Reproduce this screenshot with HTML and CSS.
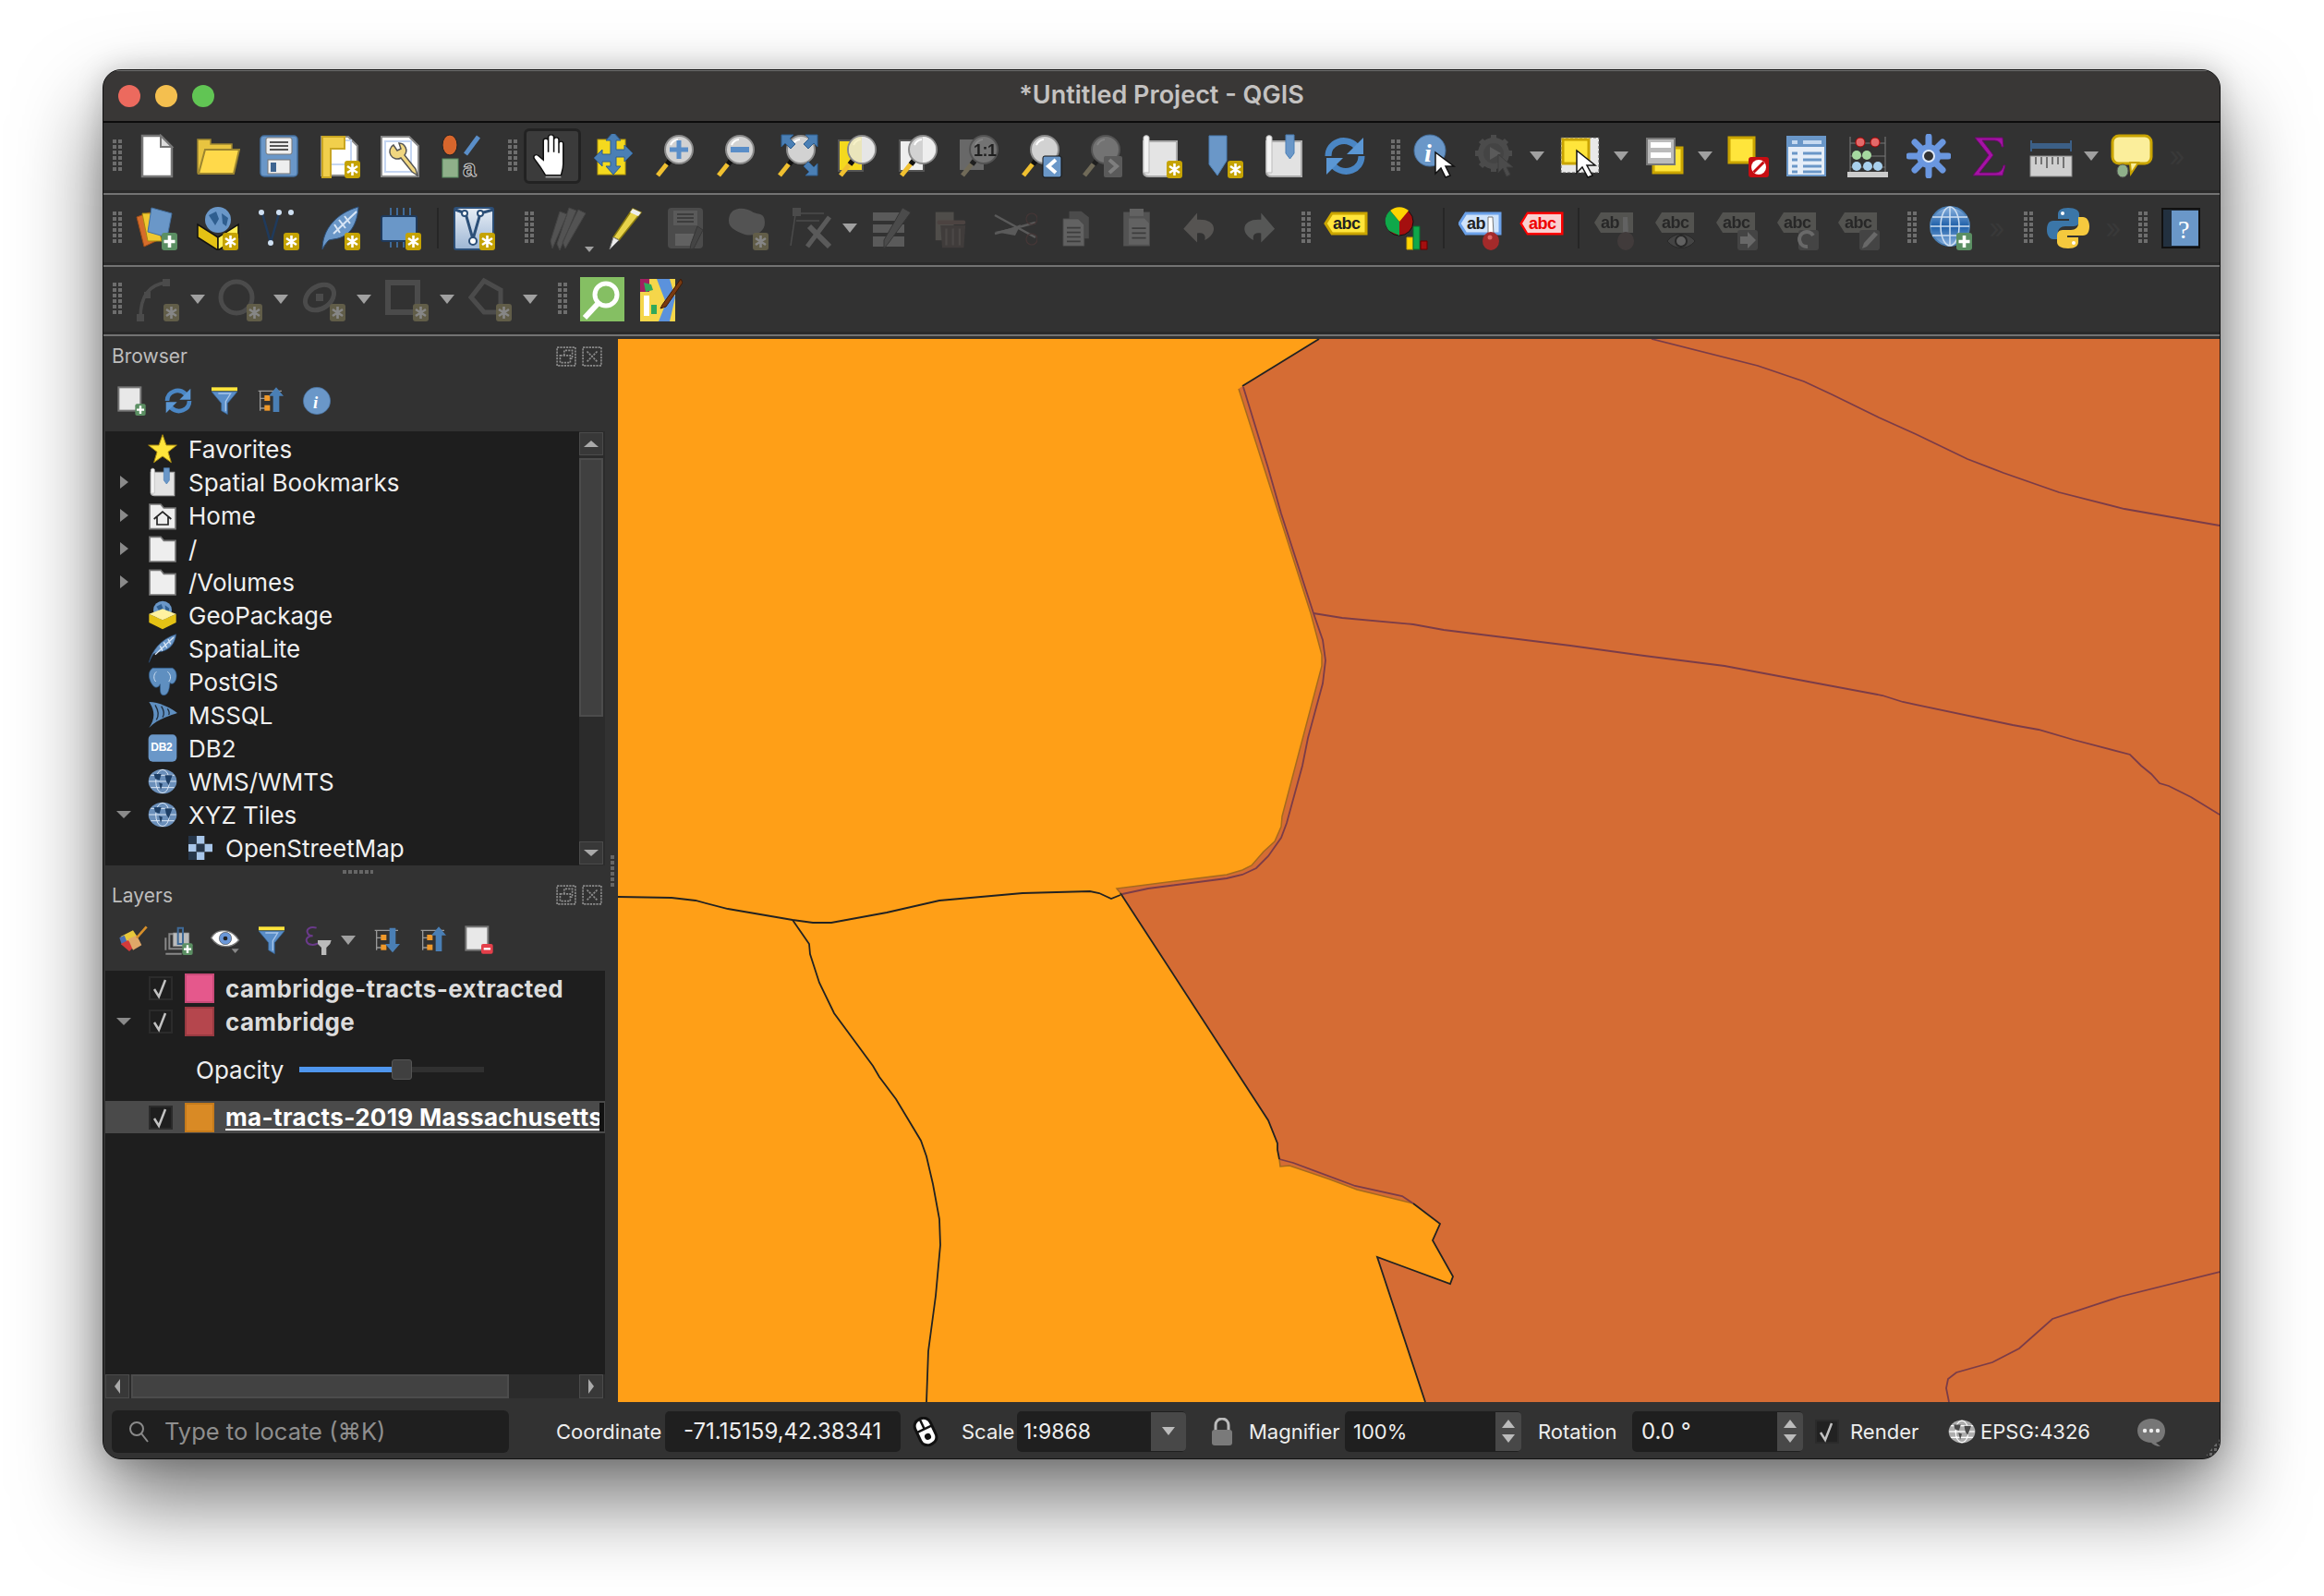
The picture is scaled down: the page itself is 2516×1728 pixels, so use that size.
FILE: index.html
```html
<!doctype html>
<html>
<head>
    <title>*Untitled Project - QGIS</title>
    <link rel="stylesheet" href="styles.css">
</head>
<body>
<svg class="defs" width="0" height="0">
    <defs>
        <linearGradient id="gGlobe" x1="0" y1="0" x2="0" y2="1"><stop offset="0" stop-color="#8db4e0"/><stop offset=".5" stop-color="#1c5ea8"/><stop offset="1" stop-color="#8db4e0"/></linearGradient>
        <linearGradient id="gSheet" x1="0" y1="0" x2="0" y2="1"><stop offset="0" stop-color="#e8eef6"/><stop offset="1" stop-color="#9db6d4"/></linearGradient>
        <g id="star"><rect x="29" y="29" width="17" height="19" rx="3" fill="#c5a303"/><path d="M37.500 32v13M32 35l11 7M43 35l-11 7" stroke="#fff" stroke-width="2.600"/></g>
        <g id="plus"><rect x="29" y="29" width="17" height="19" rx="3" fill="#5b8f63"/><path d="M37.500 32v13M31.500 38.500h12" stroke="#fff" stroke-width="3.600"/></g>
        <g id="lens"><path d="M18 30 6 45" stroke="#f0c030" stroke-width="5"/><path d="M20 28l-4 5" stroke="#111" stroke-width="6"/><circle cx="29" cy="17" r="15" fill="#d2d2d2" stroke="#8a8a8a" stroke-width="2"/><path d="M20 12a10 10 0 0 1 8-6" stroke="#fff" stroke-width="2" fill="none"/></g>
        <g id="arrowCursor"><path d="M24 20v23l6-6 5 10 5-2-5-10h9z" fill="#fff" stroke="#111" stroke-width="1.500"/></g>
        <g id="abcTag"><path d="M8 7h35v22H8L1 18z" fill="#8a8a72"/><text x="8" y="24" class="gt" fill="#222">abc</text></g>

        <symbol id="new" viewBox="0 0 48 48"><path d="M8 2h20l12 12v32H8z" fill="#fff" stroke="#777" stroke-width="2.500"/><path d="M28 2v12h12z" fill="#ddd" stroke="#777" stroke-width="2"/></symbol>
        <symbol id="open" viewBox="0 0 48 48"><path d="M2 6h14v5h23v6H10L6 42H2z" fill="#e8c440" stroke="#9c8530" stroke-width="1.500"/><path d="M10 17h37l-6 26H3z" fill="#ffd94a" stroke="#9c8530" stroke-width="2"/></symbol>
        <symbol id="save" viewBox="0 0 48 48"><rect x="4" y="2" width="40" height="44" rx="4" fill="#6a97c8" stroke="#45709f" stroke-width="1.500"/><rect x="10" y="4" width="28" height="18" rx="2" fill="#eee" stroke="#777"/><path d="M14 9h20M14 13h20M14 17h20" stroke="#555" stroke-width="2"/><rect x="12" y="28" width="24" height="15" fill="#eee" stroke="#777"/><rect x="15" y="31" width="6" height="10" fill="#3e6490"/></symbol>
        <symbol id="layoutNew" viewBox="0 0 48 48"><path d="M4 3h29l10 10v32H4z" fill="#fff" stroke="#888" stroke-width="2"/><path d="M8 7h28v26H12" fill="none" stroke="#c5d6f2" stroke-width="2"/><path d="M5 3h24v13H14v31H5z" fill="#f1cf4c" stroke="#c9a622" stroke-width="2"/><use href="#star"/></symbol>
        <symbol id="layoutMgr" viewBox="0 0 48 48"><path d="M3 3h30l10 10v33H3z" fill="#fff" stroke="#888" stroke-width="2"/><path d="M7 8h28v33H7z" fill="none" stroke="#c5d6f2" stroke-width="2"/><path d="M16 12a8 8 0 0 0 8 14l12 15 6 4-2-7-12-15a8 8 0 0 0-6-13l2 6-4 2z" fill="#f0d680" stroke="#555" stroke-width="1.500"/></symbol>
        <symbol id="style" viewBox="0 0 48 48"><ellipse cx="11" cy="12" rx="8" ry="11" fill="#d8662c" stroke="#222"/><path d="M28 22 42 3" stroke="#5a8ec8" stroke-width="5"/><rect x="3" y="27" width="17" height="20" fill="#8fb08a" stroke="#5b8f63"/><text x="25" y="46" class="gt big" fill="#222" stroke="#ccc" stroke-width="1">a</text></symbol>
        <symbol id="hand" viewBox="0 0 48 48"><g transform="translate(-5 -1) scale(1.2 1.04)"><path d="M18 45.500h14" stroke="#999" stroke-width="2.500"/><path d="M18 44C15 38 12 33 8 27c-2-3 1-6 4-3l4 4V8c0-3 4.500-3 4.500 0v12V4c0-3 5-3 5 0v16V7c0-3 4.500-3 4.500 0v14V11c0-3 4-3 4 0v21c0 5-1 8-2 12z" fill="#fff" stroke="#111" stroke-width="1.300"/></g></symbol>
        <symbol id="panSel" viewBox="0 0 48 48"><rect x="7" y="6" width="30" height="38" fill="#f4d91e" stroke="#b79b0c"/><path d="M24 1l8 9h-5v10h9v-5l9 9-9 9v-5h-9v10h5l-8 9-8-9h5V33h-9v5l-9-9 9-9v5h9V10h-5z" fill="#4a7fb5" stroke="#2f5e8f" transform="translate(0 -3)"/></symbol>
        <symbol id="zoomIn" viewBox="0 0 48 48"><use href="#lens"/><path d="M29 7v20M19 17h20" stroke="#5a8ec8" stroke-width="5"/></symbol>
        <symbol id="zoomOut" viewBox="0 0 48 48"><use href="#lens"/><path d="M19 17h20" stroke="#5a8ec8" stroke-width="6"/></symbol>
        <symbol id="zoomFull" viewBox="0 0 48 48"><use href="#lens"/><path d="M8 1h13l-4 4 6 6-5 5-6-6-4 4zM47 1v13l-4-4-6 6-5-5 6-6-4-4zM47 45H34l4-4-6-6 5-5 6 6 4-4z" fill="#4a7fb5" stroke="#2f5e8f"/></symbol>
        <symbol id="zoomSel" viewBox="0 0 48 48"><rect x="4" y="7" width="26" height="33" fill="#f4d91e" stroke="#555" stroke-width="2"/><use href="#lens"/><path d="M29 3a14 14 0 0 1 0 28z" fill="#e8e8e8" opacity=".9"/><path d="M29 3a14 14 0 0 0 0 28z" fill="#f4ecb0" opacity=".7"/></symbol>
        <symbol id="zoomLayer" viewBox="0 0 48 48"><rect x="4" y="7" width="26" height="33" fill="#eee" stroke="#555" stroke-width="2"/><use href="#lens"/><path d="M29 3a14 14 0 0 1 0 28z" fill="#eee"/></symbol>
        <symbol id="zoom11" viewBox="0 0 48 48"><rect x="3" y="6" width="26" height="33" fill="#bbb"/><use href="#lens"/><text x="18" y="24" class="gt" fill="#111">1:1</text></symbol>
        <symbol id="zoomLast" viewBox="0 0 48 48"><use href="#lens"/><rect x="27" y="24" width="20" height="23" rx="2" fill="#6a97c8" stroke="#111"/><path d="M41 28l-8 7 8 7" fill="none" stroke="#fff" stroke-width="4"/></symbol>
        <symbol id="zoomNext" viewBox="0 0 48 48"><use href="#lens"/><rect x="27" y="24" width="20" height="23" rx="2" fill="#999"/><path d="M33 28l8 7-8 7" fill="none" stroke="#eee" stroke-width="4"/></symbol>
        <symbol id="mapNew" viewBox="0 0 48 48"><path d="M4 8h36v38H10c-4 0-6-2-6-5z" fill="#e4e4e4" stroke="#aaa" stroke-width="2"/><path d="M4 4c0-3 6-3 6 0v38H4z" fill="#f4f4f4" stroke="#bbb"/><use href="#star"/></symbol>
        <symbol id="bmNew" viewBox="0 0 48 48"><path d="M6 2h19v27l-10 16-9-12z" fill="#6a97c8" stroke="#4a7fb5" transform="translate(3 0)"/><use href="#star"/></symbol>
        <symbol id="bm" viewBox="0 0 48 48"><path d="M5 8h38v38H11c-4 0-6-2-6-5z" fill="#e2e2e2" stroke="#aaa" stroke-width="2"/><path d="M5 4c0-3 6-3 6 0v38H5z" fill="#f4f4f4" stroke="#bbb"/><path d="M26 1h9v20l-4.500 6-4.500-6z" fill="#6a97c8" stroke="#4a7fb5"/></symbol>
        <symbol id="refresh" viewBox="0 0 48 48"><path d="M6 24C6 9 24 2 36 13" fill="none" stroke="#4a86c4" stroke-width="7"/><path d="M42 24C42 39 24 46 12 35" fill="none" stroke="#4a86c4" stroke-width="7"/><path d="M44 4v18H26z" fill="#5b97d4"/><path d="M4 44V26h18z" fill="#5b97d4"/></symbol>
        <symbol id="identify" viewBox="0 0 48 48"><circle cx="18" cy="18" r="17" fill="#6a97c8" stroke="#45709f"/><text x="12" y="30" class="gt huge" fill="#fff">i</text><use href="#arrowCursor"/></symbol>
        <symbol id="actions" viewBox="0 0 48 48"><circle cx="21" cy="21" r="14" fill="#666" stroke="#777" stroke-width="6"/><path d="M21 1v8M21 33v8M1 21h8M33 21h8M7 7l6 6M29 29l6 6M35 7l-6 6M7 35l6-6" stroke="#777" stroke-width="6"/><path d="M17 14l12 7-12 7z" fill="#999"/><path d="M26 22v20l5-5 4 9 4-2-4-8h7z" fill="#777" stroke="#555"/></symbol>
        <symbol id="select" viewBox="0 0 48 48"><rect x="3" y="4" width="41" height="38" fill="#e8e8e8" stroke="#555" stroke-dasharray="3 2"/><rect x="5" y="6" width="28" height="26" fill="#ffe53b" stroke="#c9a400" stroke-width="3"/><path d="M20 18v24l6-6 6 11 5-2-6-11h9z" fill="#fff" stroke="#111" stroke-width="1.500"/></symbol>
        <symbol id="selectVal" viewBox="0 0 48 48"><rect x="12" y="15" width="31" height="27" fill="#ffe53b" stroke="#c9a400" stroke-width="3"/><rect x="5" y="5" width="30" height="28" fill="#bbb" stroke="#777" stroke-width="2"/><path d="M9 9h22v6H9zM9 20h22v6H9z" fill="#fff"/></symbol>
        <symbol id="deselect" viewBox="0 0 48 48"><rect x="3" y="4" width="27" height="27" fill="#ffe53b" stroke="#c9a400" stroke-width="3"/><rect x="24" y="25" width="22" height="22" rx="3" fill="#c70d12"/><circle cx="35" cy="36" r="8" fill="#fff"/><path d="M29.500 41.500l11-11" stroke="#c70d12" stroke-width="3"/></symbol>
        <symbol id="table" viewBox="0 0 48 48"><rect x="3" y="3" width="41" height="42" fill="#e6eef8" stroke="#6a97c8" stroke-width="2"/><path d="M3 3h41v11H3z" fill="#6a97c8"/><path d="M8 7h6v4H8zM20 7h20v4H20z" fill="#c5d9f0"/><path d="M8 21h6M8 28h6M8 35h6M8 41h6M20 21h20M20 28h20M20 35h20M20 41h20" stroke="#6a97c8" stroke-width="3"/></symbol>
        <symbol id="stats" viewBox="0 0 48 48"><path d="M5 3v40M43 3v40" stroke="#666" stroke-width="1.500"/><rect x="2" y="41" width="44" height="6" fill="#ccc"/><path d="M5 10h38M5 24h38M5 36h38" stroke="#777"/><circle cx="16" cy="9" r="5" fill="#e46a6a" stroke="#a00"/><circle cx="32" cy="9" r="5" fill="#e46a6a" stroke="#a00"/><circle cx="12" cy="23" r="5" fill="#a5d8a0"/><circle cx="23" cy="23" r="5" fill="#a5d8a0"/><circle cx="12" cy="35" r="5" fill="#a8d0ee"/><circle cx="24" cy="35" r="5" fill="#a8d0ee"/><circle cx="35" cy="35" r="5" fill="#a8d0ee"/></symbol>
        <symbol id="toolbox" viewBox="0 0 48 48"><g stroke="#6a97e0" stroke-width="7" stroke-linecap="round"><path d="M24 3v42M3 24h42M9 9l30 30M39 9 9 39"/></g><circle cx="24" cy="24" r="13" fill="#6a97e0"/><circle cx="24" cy="24" r="6" fill="#323232" stroke="#dde8f8" stroke-width="2"/></symbol>
        <symbol id="sum" viewBox="0 0 48 48"><path d="M8 4h30l1 10h-2c-1-5-4-7-9-7H16l12 16-15 19h17c5 0 8-3 9-8h2l-3 11H6l17-22z" fill="#a512a5" stroke="#6a0a6a"/></symbol>
        <symbol id="measure" viewBox="0 0 48 48"><path d="M3 7v12M46 7v12" stroke="#3c5f86" stroke-width="2"/><path d="M3 13h43" stroke="#3c5f86" stroke-width="6"/><rect x="2" y="24" width="45" height="22" fill="#cfcfcf" stroke="#888"/><path d="M8 25v8M14 25v8M20 25v12M26 25v8M32 25v8M38 25v12" stroke="#555" stroke-width="1.500"/></symbol>
        <symbol id="tip" viewBox="0 0 48 48"><rect x="3" y="2" width="42" height="30" rx="7" fill="#fbee9b" stroke="#c9a400" stroke-width="3"/><path d="M22 31h9l-8 12z" fill="#fbee9b" stroke="#c9a400" stroke-width="2"/><ellipse cx="14" cy="40" rx="6" ry="7" fill="#8fb08a" stroke="#555"/></symbol>

        <symbol id="dsm" viewBox="0 0 48 48"><path d="M2 12 16 7l9 30-15 7z" fill="#d66d2b" stroke="#a04d17"/><path d="M8 8h15l6 30H14z" fill="#f0c830" stroke="#a98a10"/><path d="M18 2 40 8l-5 26-21-6z" fill="#6a97c8" stroke="#45709f"/><use href="#plus"/></symbol>
        <symbol id="gpkgNew" viewBox="0 0 48 48"><circle cx="24" cy="15" r="14" fill="#6a97c8"/><path d="M14 10l8-4 3 8-4 7zM28 8l7 5-2 9-4-3z" fill="#2f5e8f"/><path d="M2 20 24 34v14L2 34z" fill="#e4c214" stroke="#111" stroke-width="1.500"/><path d="M24 34 46 20v14L24 48z" fill="#ffee55" stroke="#111" stroke-width="1.500"/><use href="#star"/></symbol>
        <symbol id="pointNew" viewBox="0 0 48 48"><path d="M6 8l9 32 9-32" fill="none" stroke="#1f3a5c" stroke-width="2.500"/><circle cx="5" cy="7" r="3" fill="#cfe0f2"/><circle cx="15" cy="40" r="3" fill="#cfe0f2"/><circle cx="24" cy="7" r="3" fill="#cfe0f2"/><circle cx="37" cy="7" r="3" fill="#cfe0f2"/><use href="#star"/></symbol>
        <symbol id="feather" viewBox="0 0 48 48"><path d="M5 47C5 25 20 8 44 1c-1 17-8 33-27 35l-5 1c-3 3-5 6-7 10z" fill="#6a97c8" stroke="#2c4f78"/><path d="M17 30 42 6M18 20l6 9M23 15l7 9M29 11l6 8" stroke="#d8e6f6" stroke-width="2"/><use href="#star"/></symbol>
        <symbol id="chip" viewBox="0 0 48 48"><path d="M13 2v9M20 2v9M27 2v9M34 2v9M13 36v9M20 36v9M27 36v9" stroke="#3f6a98" stroke-width="2"/><rect x="3" y="11" width="38" height="27" rx="2" fill="#6a97c8" stroke="#1f3a5c" stroke-width="2"/><use href="#star"/></symbol>
        <symbol id="mesh" viewBox="0 0 48 48"><rect x="2" y="2" width="42" height="45" rx="2" fill="url(#gSheet)" stroke="#2c4f78" stroke-width="2"/><path d="M3 4l11 4 8 28 8-28 14-4" fill="none" stroke="#2c4f78" stroke-width="3"/><circle cx="22" cy="38" r="4" fill="#fff" stroke="#2c4f78" stroke-width="2"/><circle cx="30" cy="8" r="3" fill="#fff" stroke="#2c4f78" stroke-width="2"/><circle cx="13" cy="8" r="3" fill="#fff" stroke="#2c4f78" stroke-width="2"/><use href="#star"/></symbol>
        <symbol id="pencils" viewBox="0 0 48 48"><path d="M14 6l8 3L6 46 4 38zM24 2l8 3L14 48l-3-7zM34 4l8 4-22 38-3-7z" fill="#888" stroke="#666"/></symbol>
        <symbol id="pencil" viewBox="0 0 48 48"><path d="M31 3l9 4-24 30-6-3z" fill="#e8d34a" stroke="#8a7a10" stroke-width="1.500"/><path d="M31 3l9 4-3 4-9-4z" fill="#eee"/><path d="M10 34l6 3-10 10z" fill="#eee" stroke="#888"/></symbol>
        <symbol id="saveEdits" viewBox="0 0 48 48"><rect x="3" y="2" width="38" height="44" rx="4" fill="#777"/><rect x="9" y="5" width="26" height="16" fill="#999"/><path d="M13 9h18M13 13h18M13 17h18" stroke="#555" stroke-width="2"/><rect x="11" y="30" width="22" height="13" fill="#aaa"/><path d="M35 22l6 4-10 20-4 1 1-6z" fill="#666" stroke="#444"/></symbol>
        <symbol id="blob" viewBox="0 0 48 48"><path d="M4 10c4-10 18-8 24-4s14 0 14 12-14 16-24 12S0 22 4 10z" fill="#888"/><use href="#star"/></symbol>
        <symbol id="vertex" viewBox="0 0 48 48"><path d="M10 3l-6 40M10 8h30M10 16h25" stroke="#777" stroke-width="1.500"/><rect x="6" y="2" width="9" height="9" fill="#777"/><path d="M46 12 22 44" stroke="#999" stroke-width="5"/><path d="M24 22l22 22" stroke="#999" stroke-width="6"/></symbol>
        <symbol id="editAttr" viewBox="0 0 48 48"><path d="M2 7h34v9H2zM2 20h34v9H2zM2 33h34v11H2z" fill="#999"/><path d="M34 2l9 5-24 33-5 6 0-9z" fill="#777" stroke="#444"/></symbol>
        <symbol id="trash" viewBox="0 0 48 48"><g transform="translate(2 3) scale(.9)"><rect x="2" y="4" width="22" height="34" fill="#8a7a60"/><rect x="4" y="14" width="34" height="5" rx="2" fill="#a05a4a"/><path d="M8 20h30l-2 27H10z" fill="#6a5048"/><path d="M15 24v20M23 24v20M31 24v20" stroke="#8a6a60" stroke-width="2.500"/></g></symbol>
        <symbol id="cut" viewBox="0 0 48 48"><path d="M2 10l44 24M2 30l44-12" stroke="#999" stroke-width="2.500"/><path d="M2 28c10-2 20-4 28-8l-6 12z" fill="#999"/><circle cx="42" cy="14" r="6" fill="none" stroke="#a33" stroke-width="1.200"/><circle cx="42" cy="36" r="6" fill="none" stroke="#a33" stroke-width="1.200"/></symbol>
        <symbol id="copy" viewBox="0 0 48 48"><g transform="translate(5 4) scale(.82)"><path d="M14 2h16l10 8v28H14z" fill="#777"/><path d="M6 12h20l8 8v28H6z" fill="#aaa" stroke="#666"/><path d="M11 24h18M11 30h18M11 36h18M11 42h18" stroke="#555" stroke-width="2"/></g></symbol>
        <symbol id="paste" viewBox="0 0 48 48"><g transform="translate(5 3) scale(.84 .88)"><rect x="5" y="4" width="34" height="42" fill="#888"/><rect x="13" y="0" width="18" height="9" fill="#aaa"/><path d="M12 12h20l6 6v26H12z" fill="#aaa"/><path d="M16 24h18M16 30h18M16 36h18" stroke="#555" stroke-width="2"/></g></symbol>
        <symbol id="undo" viewBox="0 0 48 48"><path transform="translate(5 5) scale(.82)" d="M22 3 4 24l18 18V30c8-2 12 2 10 9 8-4 12-10 12-15 0-9-10-13-22-12z" fill="#99897e"/></symbol>
        <symbol id="redo" viewBox="0 0 48 48"><path transform="translate(5 5) scale(.82)" d="M26 3l18 21-18 18V30c-8-2-12 2-10 9-8-4-12-10-12-15 0-9 10-13 22-12z" fill="#8a958e"/></symbol>
        <symbol id="abcY" viewBox="0 0 48 48"><path d="M9 8h37v22H9L2 19z" fill="#ffe53b" stroke="#c9a400" stroke-width="3"/><text x="10" y="25" class="gt" fill="#222">abc</text></symbol>
        <symbol id="diagram" viewBox="0 0 48 48"><circle cx="16" cy="17" r="15" fill="#a40f0f" stroke="#111"/><path d="M16 17 6 5a15 15 0 0 1 20 0z" fill="#ffd400"/><path d="M16 17 6 5a15 15 0 0 0-1 22l11 5z" fill="#0fa84a"/><path d="M24 34h7v13h-7z" fill="#ffd400" stroke="#c9a400"/><path d="M31 22h7v25h-7z" fill="#0fa84a" stroke="#0a6a2f"/><path d="M39 38h7v9h-7z" fill="#a40f0f" stroke="#600"/></symbol>
        <symbol id="abPin" viewBox="0 0 48 48"><path d="M8 8h37v22H8L1 19z" fill="#cfe3fb" stroke="#6aa0e8" stroke-width="3"/><text x="9" y="25" class="gt" fill="#222">ab</text><path d="M32 12h5l1 19h-6z" fill="#fff" stroke="#777"/><ellipse cx="35" cy="38" rx="9" ry="10" fill="#a32a2a"/><circle cx="34" cy="34" r="2.500" fill="#d66"/></symbol>
        <symbol id="abcR" viewBox="0 0 48 48"><path d="M9 8h37v22H9L2 19z" fill="#fff" stroke="#f00" stroke-width="3"/><path d="M9 9h36v20H9L3 19z" fill="#f9d0d0"/><text x="10" y="25" class="gt" fill="#e00">abc</text></symbol>
        <symbol id="abOff" viewBox="0 0 48 48"><path d="M8 7h35v22H8L1 18z" fill="#8a8a72"/><text x="8" y="24" class="gt" fill="#222">ab</text><path d="M32 12h5l1 19h-6z" fill="#aaa"/><ellipse cx="35" cy="38" rx="9" ry="10" fill="#7a4a4a"/></symbol>
        <symbol id="abcEye" viewBox="0 0 48 48"><use href="#abcTag"/><path d="M14 38c8-10 22-10 30 0-8 10-22 10-30 0z" fill="#666" stroke="#222"/><circle cx="29" cy="38" r="6" fill="#aaa" stroke="#222" stroke-width="2"/></symbol>
        <symbol id="abcArrow" viewBox="0 0 48 48"><use href="#abcTag"/><rect x="24" y="26" width="22" height="22" rx="3" fill="#666"/><path d="M27 33h8v-5l9 9-9 9v-5h-8z" fill="#bbb"/></symbol>
        <symbol id="abcRot" viewBox="0 0 48 48"><use href="#abcTag"/><rect x="24" y="26" width="22" height="22" rx="3" fill="#666"/><path d="M40 32a8 8 0 1 0-6 12" fill="none" stroke="#bbb" stroke-width="4"/></symbol>
        <symbol id="abcEdit" viewBox="0 0 48 48"><use href="#abcTag"/><rect x="24" y="26" width="22" height="22" rx="3" fill="#666"/><path d="M40 28l4 3-12 13-5 2 2-6z" fill="#bbb"/></symbol>
        <symbol id="globePlus" viewBox="0 0 48 48"><circle cx="22" cy="22" r="21" fill="url(#gGlobe)" stroke="#4a7fb5" stroke-width="2"/><g fill="none" stroke="#cfe0f2" stroke-width="1.500"><ellipse cx="22" cy="22" rx="10" ry="21"/><path d="M22 1v42M3 12h38M1 22h42M3 32h38"/></g><use href="#plus"/></symbol>
        <symbol id="python" viewBox="0 0 48 48"><path d="M24 2c-8 0-11 3-11 7v5h12v2H8c-5 0-7 4-7 10s3 10 7 10h5v-7c0-4 3-7 8-7h9c4 0 6-3 6-6V9c0-4-4-7-12-7z" fill="#3b76a8"/><circle cx="18" cy="8" r="2" fill="#fff"/><path d="M24 46c8 0 11-3 11-7v-5H23v-2h17c5 0 7-4 7-10s-3-10-7-10h-5v7c0 4-3 7-8 7h-9c-4 0-6 3-6 6v7c0 4 4 7 12 7z" fill="#f5c93e"/><circle cx="30" cy="40" r="2" fill="#fff"/></symbol>
        <symbol id="help" viewBox="0 0 48 48"><rect x="2" y="3" width="40" height="42" fill="#22303f" stroke="#111" stroke-width="2"/><rect x="12" y="5" width="29" height="38" fill="#6a97c8"/><text x="19" y="35" class="gt huge thin" fill="#fff">?</text></symbol>

        <symbol id="curve" viewBox="0 0 48 48"><path d="M6 44C6 20 16 8 34 6" fill="none" stroke="#777" stroke-width="3.500"/><path d="M2 40h8v8H2zM10 16h7v7h-7zM30 2h8v8h-8z" fill="#777"/><use href="#star" transform="translate(2 0)"/></symbol>
        <symbol id="circle" viewBox="0 0 48 48"><circle cx="20" cy="22" r="17" fill="none" stroke="#777" stroke-width="5"/><use href="#star" transform="translate(2 0)"/></symbol>
        <symbol id="ellipse" viewBox="0 0 48 48"><ellipse cx="20" cy="22" rx="17" ry="12" fill="none" stroke="#777" stroke-width="5" transform="rotate(-35 20 22)"/><path d="M16 18h8v8h-8z" fill="#777"/><use href="#star" transform="translate(2 0)"/></symbol>
        <symbol id="rect" viewBox="0 0 48 48"><path d="M4 6h32v32H4z" fill="none" stroke="#777" stroke-width="6"/><use href="#star" transform="translate(2 0)"/></symbol>
        <symbol id="poly" viewBox="0 0 48 48"><path d="M18 4 36 14v24H18L4 22z" fill="none" stroke="#777" stroke-width="5"/><use href="#star" transform="translate(2 0)"/></symbol>
        <symbol id="locator" viewBox="0 0 48 48"><rect x="0" y="0" width="48" height="48" fill="#85bf63"/><circle cx="28" cy="19" r="12" fill="none" stroke="#fff" stroke-width="5"/><path d="M19 29 5 44" stroke="#fff" stroke-width="6"/></symbol>
        <symbol id="osm" viewBox="0 0 48 48"><rect x="2" y="2" width="38" height="46" fill="#f5d64a"/><path d="M20 2h14l6 20-6 26H22l8-20z" fill="#5b92dc"/><path d="M2 2h10v14H2z" fill="#a02060"/><path d="M6 6l8 2 2 6-8 2z" fill="#31a85a"/><path d="M6 20h6v22H6z" fill="#fff"/><path d="M14 30h6v10h-6z" fill="#31a85a"/><path d="M46 2 26 30l-2 4 6-2L48 6z" fill="#7a3a10" stroke="#401a05"/></symbol>

        <symbol id="addGroup" viewBox="0 0 48 48"><rect x="2" y="2" width="36" height="38" fill="#e8e8e8" stroke="#777" stroke-width="3"/><use href="#plus"/></symbol>
        <symbol id="remove" viewBox="0 0 48 48"><rect x="2" y="2" width="36" height="38" fill="#e8e8e8" stroke="#777" stroke-width="3"/><rect x="27" y="30" width="19" height="16" rx="3" fill="#e43f4a"/><path d="M31 38h11" stroke="#fff" stroke-width="3.500"/></symbol>
        <symbol id="filter" viewBox="0 0 48 48"><path d="M3 2h42v6H3z" fill="#ffe53b"/><path d="M3 9h42L29 28v18l-10-6V28z" fill="#5a8ec8" stroke="#2f5e8f"/><path d="M14 12h20L26 25v16" fill="none" stroke="#a8c6ea" stroke-width="2"/></symbol>
        <symbol id="collapse" viewBox="0 0 48 48"><path d="M4 8h38M7 8v32M7 20h10M7 36h10" stroke="#999" stroke-width="2"/><rect x="14" y="15" width="9" height="9" fill="#f0992a"/><rect x="14" y="31" width="9" height="9" fill="#f0992a"/><path d="M33 2 45 16h-7v26h-10V16h-7z" fill="#4a7fb5"/></symbol>
        <symbol id="expand" viewBox="0 0 48 48"><path d="M4 8h38M7 8v32M7 20h10M7 36h10" stroke="#999" stroke-width="2"/><rect x="14" y="15" width="9" height="9" fill="#f0992a"/><rect x="14" y="31" width="9" height="9" fill="#f0992a"/><path d="M33 44 45 30h-7V4h-10v26h-7z" fill="#4a7fb5"/></symbol>
        <symbol id="info" viewBox="0 0 48 48"><circle cx="24" cy="24" r="22" fill="#6a97c8" stroke="#45709f"/><text x="18" y="36" class="gt huge" fill="#fff">i</text></symbol>
        <symbol id="brush" viewBox="0 0 48 48"><path d="M4 18 24 8l8 12-24 12z" fill="#e8c83a"/><path d="M2 20l8-4 4 10-8 6z" fill="#4a6fb5"/><path d="M4 30l12-6 10 10-8 8z" fill="#d43a3a"/><path d="M16 22l14-6 8 16-14 8z" fill="#e0a868"/><path d="M30 20 46 2" stroke="#d8902a" stroke-width="4"/></symbol>
        <symbol id="clip" viewBox="0 0 48 48"><path d="M8 34V14h30v24H8zM2 40V20M2 46h26" fill="none" stroke="#888" stroke-width="3"/><path d="M14 12h26v22H14z" fill="#bbb" stroke="#888"/><path d="M22 4h8v26h-8z" fill="none" stroke="#3f6a98" stroke-width="3"/><use href="#plus"/></symbol>
        <symbol id="eye" viewBox="0 0 48 48"><path d="M1 20C10 4 34 4 46 24 34 38 12 38 1 20z" fill="#fff" stroke="#777" stroke-width="2"/><circle cx="24" cy="21" r="10" fill="#6a97d8" stroke="#555"/><circle cx="24" cy="21" r="3.500" fill="#222"/><path d="M34 38h12l-6 7z" fill="#888"/></symbol>
        <symbol id="exprFilter" viewBox="0 0 48 48"><path d="M22 4c-10-3-18 2-14 9 1 3 5 4 8 4-6 0-12 3-10 9 2 6 12 7 18 3" fill="none" stroke="#6a3a8a" stroke-width="3"/><path d="M24 24h22l-2 6-6 6v12h-8V36l-6-6z" fill="#bbb"/></symbol>
        <symbol id="starFav" viewBox="0 0 48 48"><path d="M24 1l6 17h17L33 29l5 17-14-10-14 10 5-17L1 18h17z" fill="#ffe53b" stroke="#a98a10" stroke-width="1.500"/></symbol>
        <symbol id="homeF" viewBox="0 0 48 48"><path d="M3 6h18l5 6h19v34H3z" fill="#eee" stroke="#777" stroke-width="2.500"/><path d="M10 30 24 18l14 12M15 27v12h18V27" fill="none" stroke="#222" stroke-width="2.500"/></symbol>
        <symbol id="folder" viewBox="0 0 48 48"><path d="M3 5h18l5 6h19v34H3z" fill="#eee" stroke="#777" stroke-width="2.500"/></symbol>
        <symbol id="gpkg" viewBox="0 0 48 48"><circle cx="24" cy="16" r="15" fill="#6a97c8"/><path d="M14 10l8-4 3 8-4 7zM28 8l7 5-2 9-4-3z" fill="#2f5e8f"/><path d="M2 22l22 10 22-10v14L24 47 2 36z" fill="#e4c214"/><path d="M2 22l22-8 22 8-22 10z" fill="#fff2a0"/></symbol>
        <symbol id="featherS" viewBox="0 0 48 48"><path d="M2 47C6 28 22 8 46 1c-2 16-12 28-30 29l-7 3c-3 4-5 9-7 14z" fill="#6a97c8" stroke="#2c4f78"/><path d="M12 34 42 6M20 20l4 8M26 14l5 9M33 9l4 8" stroke="#d8e6f6" stroke-width="2"/></symbol>
        <symbol id="pg" viewBox="0 0 48 48"><path d="M8 2h32c8 4 8 16 4 22-2 4-6 4-8 2-1 8-2 20-10 20-6 0-6-6-6-18-2 6-8 6-10 4C2 24-2 8 8 2z" fill="#5f8fc0" stroke="#2f5e8f"/><path d="M14 8c-5 4-5 12-1 16M32 8c6 4 6 12 2 16" fill="none" stroke="#cfe0f2" stroke-width="1.500"/></symbol>
        <symbol id="sail" viewBox="0 0 48 48"><path d="M2 3c14 0 34 8 46 18-10 4-30 8-46 24 10-14 10-28 0-42z" fill="#5f8fc0"/><path d="M12 8c6 10 6 18 2 24M22 10c5 8 5 14 2 18M32 14c3 4 3 8 2 10" stroke="#1e2d3d" stroke-width="2" fill="none"/></symbol>
        <symbol id="db2" viewBox="0 0 48 48"><rect x="1" y="2" width="46" height="44" rx="7" fill="#6a97c8"/><text x="5" y="29" class="gt" fill="#fff">DB2</text></symbol>
        <symbol id="globeS" viewBox="0 0 48 48"><ellipse cx="24" cy="24" rx="23" ry="20" fill="#6a8fba"/><ellipse cx="24" cy="24" rx="11" ry="19" fill="none" stroke="#dbe7f5" stroke-width="1.500"/><path d="M2 24h44M5 14h38M5 34h38" stroke="#dbe7f5" stroke-width="1.500"/><path d="M10 12h12l-3 10-7-2zM28 14h12l-6 16-4-6zM18 26l6 2-3 10z" fill="#1e3f66"/></symbol>
        <symbol id="tiles" viewBox="0 0 48 48"><path d="M16 0h16v16H16zM0 16h16v16H0zM32 16h16v16H32zM16 32h16v16H16z" fill="#a8c6ea"/><path d="M0 0h16v16H0zM16 16h16v16H16zM0 32h16v16H0z" fill="#26364a"/></symbol>
        <symbol id="dockFloat" viewBox="0 0 20 20"><path d="M1 1h18v18H1zM4 9h10v7H4zM8 9V4h8v8h-2" fill="none" stroke="#8c8c8c" stroke-width="1.500" stroke-dasharray="2 1"/></symbol>
        <symbol id="dockClose" viewBox="0 0 20 20"><path d="M1 1h18v18H1zM5 5l10 10M15 5 5 15" fill="none" stroke="#8c8c8c" stroke-width="1.500" stroke-dasharray="2 1"/></symbol>
        <symbol id="check" viewBox="0 0 26 26"><path d="M6 14l5 8 7-18" fill="none" stroke="#c2c2c2" stroke-width="2.500"/></symbol>
    </defs>
</svg>

<div class="window">
    <div class="titlebar">
        <div class="lights"><span class="light red"></span><span class="light yellow"></span><span class="light green"></span></div>
        <div class="title">*Untitled Project - QGIS</div>
    </div>

    <div class="toolbar">
        <span class="grip lead"></span>
        <span class="tb"><svg class="ic"><use href="#new"/></svg></span>
        <span class="tb"><svg class="ic"><use href="#open"/></svg></span>
        <span class="tb"><svg class="ic"><use href="#save"/></svg></span>
        <span class="tb"><svg class="ic"><use href="#layoutNew"/></svg></span>
        <span class="tb"><svg class="ic"><use href="#layoutMgr"/></svg></span>
        <span class="tb"><svg class="ic"><use href="#style"/></svg></span>
        <span class="grip"></span>
        <span class="tb active"><svg class="ic"><use href="#hand"/></svg></span>
        <span class="tb"><svg class="ic"><use href="#panSel"/></svg></span>
        <span class="tb"><svg class="ic"><use href="#zoomIn"/></svg></span>
        <span class="tb"><svg class="ic"><use href="#zoomOut"/></svg></span>
        <span class="tb"><svg class="ic"><use href="#zoomFull"/></svg></span>
        <span class="tb"><svg class="ic"><use href="#zoomSel"/></svg></span>
        <span class="tb"><svg class="ic"><use href="#zoomLayer"/></svg></span>
        <span class="tb off"><svg class="ic"><use href="#zoom11"/></svg></span>
        <span class="tb"><svg class="ic"><use href="#zoomLast"/></svg></span>
        <span class="tb off"><svg class="ic"><use href="#zoomNext"/></svg></span>
        <span class="tb"><svg class="ic"><use href="#mapNew"/></svg></span>
        <span class="tb"><svg class="ic"><use href="#bmNew"/></svg></span>
        <span class="tb"><svg class="ic"><use href="#bm"/></svg></span>
        <span class="tb"><svg class="ic"><use href="#refresh"/></svg></span>
        <span class="grip"></span>
        <span class="tb"><svg class="ic"><use href="#identify"/></svg></span>
        <span class="tb off"><svg class="ic"><use href="#actions"/></svg></span>
        <span class="drop"></span>
        <span class="tb"><svg class="ic"><use href="#select"/></svg></span>
        <span class="drop"></span>
        <span class="tb"><svg class="ic"><use href="#selectVal"/></svg></span>
        <span class="drop"></span>
        <span class="tb"><svg class="ic"><use href="#deselect"/></svg></span>
        <span class="tb pull3"><svg class="ic"><use href="#table"/></svg></span>
        <span class="tb"><svg class="ic"><use href="#stats"/></svg></span>
        <span class="tb"><svg class="ic"><use href="#toolbox"/></svg></span>
        <span class="tb"><svg class="ic"><use href="#sum"/></svg></span>
        <span class="tb"><svg class="ic"><use href="#measure"/></svg></span>
        <span class="drop"></span>
        <span class="tb pull3"><svg class="ic"><use href="#tip"/></svg></span>
        <span class="more"></span>
    </div>

    <div class="toolbar">
        <span class="grip lead"></span>
        <span class="tb"><svg class="ic"><use href="#dsm"/></svg></span>
        <span class="tb"><svg class="ic"><use href="#gpkgNew"/></svg></span>
        <span class="tb"><svg class="ic"><use href="#pointNew"/></svg></span>
        <span class="tb"><svg class="ic"><use href="#feather"/></svg></span>
        <span class="tb"><svg class="ic"><use href="#chip"/></svg></span>
        <span class="sep"></span>
        <span class="tb"><svg class="ic"><use href="#mesh"/></svg></span>
        <span class="grip g36"></span>
        <span class="tb off minidrop"><svg class="ic"><use href="#pencils"/></svg></span>
        <span class="tb tight"><svg class="ic"><use href="#pencil"/></svg></span>
        <span class="tb off"><svg class="ic"><use href="#saveEdits"/></svg></span>
        <span class="tb off"><svg class="ic"><use href="#blob"/></svg></span>
        <span class="tb off"><svg class="ic"><use href="#vertex"/></svg></span>
        <span class="drop"></span>
        <span class="tb off"><svg class="ic"><use href="#editAttr"/></svg></span>
        <span class="tb off"><svg class="ic"><use href="#trash"/></svg></span>
        <span class="tb off"><svg class="ic"><use href="#cut"/></svg></span>
        <span class="tb off"><svg class="ic"><use href="#copy"/></svg></span>
        <span class="tb off"><svg class="ic"><use href="#paste"/></svg></span>
        <span class="tb off"><svg class="ic"><use href="#undo"/></svg></span>
        <span class="tb off"><svg class="ic"><use href="#redo"/></svg></span>
        <span class="grip g28"></span>
        <span class="tb"><svg class="ic"><use href="#abcY"/></svg></span>
        <span class="tb"><svg class="ic"><use href="#diagram"/></svg></span>
        <span class="sep"></span>
        <span class="tb"><svg class="ic"><use href="#abPin"/></svg></span>
        <span class="tb"><svg class="ic"><use href="#abcR"/></svg></span>
        <span class="sep"></span>
        <span class="tb off"><svg class="ic"><use href="#abOff"/></svg></span>
        <span class="tb off"><svg class="ic"><use href="#abcEye"/></svg></span>
        <span class="tb off"><svg class="ic"><use href="#abcArrow"/></svg></span>
        <span class="tb off"><svg class="ic"><use href="#abcRot"/></svg></span>
        <span class="tb off"><svg class="ic"><use href="#abcEdit"/></svg></span>
        <span class="grip g34"></span>
        <span class="tb"><svg class="ic"><use href="#globePlus"/></svg></span>
        <span class="more"></span>
        <span class="grip g28"></span>
        <span class="tb"><svg class="ic"><use href="#python"/></svg></span>
        <span class="more"></span>
        <span class="grip g26"></span>
        <span class="tb"><svg class="ic"><use href="#help"/></svg></span>
    </div>

    <div class="toolbar last">
        <span class="grip lead"></span>
        <span class="tb off"><svg class="ic"><use href="#curve"/></svg></span>
        <span class="drop d24"></span>
        <span class="tb off"><svg class="ic"><use href="#circle"/></svg></span>
        <span class="drop d24"></span>
        <span class="tb off"><svg class="ic"><use href="#ellipse"/></svg></span>
        <span class="drop d24"></span>
        <span class="tb off"><svg class="ic"><use href="#rect"/></svg></span>
        <span class="drop d24"></span>
        <span class="tb off"><svg class="ic"><use href="#poly"/></svg></span>
        <span class="drop d24"></span>
        <span class="grip"></span>
        <span class="tb"><svg class="ic"><use href="#locator"/></svg></span>
        <span class="tb pull3"><svg class="ic"><use href="#osm"/></svg></span>
    </div>

    <div class="main">
        <div class="sidebar">
            <div class="dock browser">
                <div class="dock-title"><span>Browser</span><div class="dock-btns"><svg class="dk"><use href="#dockFloat"/></svg><svg class="dk"><use href="#dockClose"/></svg></div></div>
                <div class="panel-tools">
                    <svg class="pi"><use href="#addGroup"/></svg>
                    <svg class="pi"><use href="#refresh"/></svg>
                    <svg class="pi"><use href="#filter"/></svg>
                    <svg class="pi"><use href="#collapse"/></svg>
                    <svg class="pi"><use href="#info"/></svg>
                </div>
                <div class="tree-wrap">
                    <ul class="tree">
                        <li><i class="tw"></i><svg class="ti"><use href="#starFav"/></svg>Favorites</li>
                        <li><i class="tw closed"></i><svg class="ti"><use href="#bm"/></svg>Spatial Bookmarks</li>
                        <li><i class="tw closed"></i><svg class="ti"><use href="#homeF"/></svg>Home</li>
                        <li><i class="tw closed"></i><svg class="ti"><use href="#folder"/></svg>/</li>
                        <li><i class="tw closed"></i><svg class="ti"><use href="#folder"/></svg>/Volumes</li>
                        <li><i class="tw"></i><svg class="ti"><use href="#gpkg"/></svg>GeoPackage</li>
                        <li><i class="tw"></i><svg class="ti"><use href="#featherS"/></svg>SpatiaLite</li>
                        <li><i class="tw"></i><svg class="ti"><use href="#pg"/></svg>PostGIS</li>
                        <li><i class="tw"></i><svg class="ti"><use href="#sail"/></svg>MSSQL</li>
                        <li><i class="tw"></i><svg class="ti"><use href="#db2"/></svg>DB2</li>
                        <li><i class="tw"></i><svg class="ti"><use href="#globeS"/></svg>WMS/WMTS</li>
                        <li><i class="tw open"></i><svg class="ti"><use href="#globeS"/></svg>XYZ Tiles</li>
                        <li class="child"><svg class="ti small"><use href="#tiles"/></svg>OpenStreetMap</li>
                    </ul>
                    <div class="vscroll">
                        <span class="sb-btn"><i class="sb-up"></i></span>
                        <span class="sb-thumb"></span>
                        <span class="sb-track"></span>
                        <span class="sb-btn"><i class="sb-down"></i></span>
                    </div>
                </div>
            </div>
            <div class="splitter"></div>
            <div class="dock layers">
                <div class="dock-title"><span>Layers</span><div class="dock-btns"><svg class="dk"><use href="#dockFloat"/></svg><svg class="dk"><use href="#dockClose"/></svg></div></div>
                <div class="panel-tools layer-tools">
                    <svg class="pi"><use href="#brush"/></svg>
                    <svg class="pi"><use href="#clip"/></svg>
                    <svg class="pi"><use href="#eye"/></svg>
                    <svg class="pi"><use href="#filter"/></svg>
                    <svg class="pi"><use href="#exprFilter"/></svg>
                    <span class="drop small"></span>
                    <svg class="pi"><use href="#expand"/></svg>
                    <svg class="pi"><use href="#collapse"/></svg>
                    <svg class="pi"><use href="#remove"/></svg>
                </div>
                <div class="layer-tree">
                    <div class="layer-row"><i class="tw"></i><span class="cb"><svg class="ck"><use href="#check"/></svg></span><span class="swatch pink"></span><b>cambridge-tracts-extracted</b></div>
                    <div class="layer-row"><i class="tw open"></i><span class="cb"><svg class="ck"><use href="#check"/></svg></span><span class="swatch maroon"></span><b>cambridge</b></div>
                    <div class="opacity-row"><span>Opacity</span><div class="slider"><span class="fill"></span><span class="knob"></span><span class="rest"></span></div></div>
                    <div class="layer-row selected"><i class="tw"></i><span class="cb"><svg class="ck"><use href="#check"/></svg></span><span class="swatch amber"></span><b class="cur">ma-tracts-2019 Massachusetts</b></div>
                    <div class="hscroll">
                        <span class="sb-btn"><i class="sb-left"></i></span>
                        <span class="sb-thumb"></span>
                        <span class="sb-track"></span>
                        <span class="sb-btn"><i class="sb-right"></i></span>
                    </div>
                </div>
            </div>
        </div>
        <div class="vsplit"></div>
        <svg class="map" viewBox="669 367 1734 1151" preserveAspectRatio="none">
            <rect x="669" y="367" width="1734" height="1151" fill="#ff9f17"/>
            <polygon fill="#d56c34" points="1428,367 1345,418 1341,421 1419,664 1431,709 1431,721 1388,884 1387,895 1380,911 1368,922 1355,937 1345,942 1328,947 1209,962 1213,967 1373,1213 1383,1238 1383,1245 1385,1255 1386,1263 1396,1262 1440,1277 1469,1288 1530,1303 1559,1325 1551,1343 1573,1382 1570,1390 1491,1361 1543,1518 2403,1518 2403,367"/>
            <g fill="none" stroke="#a56a1e" stroke-width="1.500">
                <polyline points="1341,421 1419,664 1431,709 1431,721 1388,884 1387,895 1380,911 1368,922 1355,937 1345,942 1328,947 1209,962 1213,967"/>
                <polyline points="1385,1255 1386,1263 1396,1262 1440,1277 1469,1288 1530,1303"/>
            </g>
            <g fill="none" stroke="#7b3c48" stroke-width="1.800">
                <polyline points="1346,419 1373,507 1387,556 1422,664 1432,693 1435,715 1432,740 1416,799 1410,829 1393,891 1387,907 1373,927 1360,940 1345,947 1328,951 1243,962 1215,968"/>
                <polyline points="1385,1255 1400,1259 1467,1284 1518,1295 1530,1303"/>
                <polyline points="1422,664 1453,669 1530,676 1563,682 1700,699 1780,710 1867,721 1979,742 2038,753 2060,760 2179,785 2207,790 2245,801 2306,817 2318,829 2329,838 2338,848 2348,851 2372,863 2403,882"/>
                <polyline points="1788,367 1903,396 1953,413 1983,427 2034,452 2074,470 2130,497 2169,512 2229,533 2300,551 2403,569"/>
                <polyline points="2403,1377 2295,1404 2222,1428 2186,1460 2157,1475 2118,1486 2109,1493 2107,1503 2110,1518"/>
            </g>
            <g fill="none" stroke="#222" stroke-width="1.800">
                <polyline points="1428,367 1345,418"/>
                <polyline points="1213,967 1373,1213 1383,1238 1383,1245 1385,1255"/>
                <polyline points="1530,1303 1559,1325 1551,1343 1573,1382 1570,1390 1491,1361 1543,1518"/>
                <polyline points="669,971 727,972 753,975 788,984 858,996 880,999 900,999 960,988 1017,975 1107,967 1180,965 1190,967 1203,973 1213,969"/>
                <polyline points="858,996 876,1022 877,1033 887,1064 903,1097 945,1154 952,1166 970,1190 997,1235 1003,1252 1010,1282 1017,1320 1018,1348 1013,1403 1005,1463 1003,1518"/>
            </g>
        </svg>
    </div>

    <div class="statusbar">
        <div class="locator"><svg class="mag" viewBox="0 0 24 24"><circle cx="10" cy="9" r="7" fill="none" stroke="#8a8a8a" stroke-width="2"/><path d="M15 14l7 9" stroke="#8a8a8a" stroke-width="2"/></svg><span>Type to locate (⌘K)</span></div>
        <label class="lbl coord-lbl">Coordinate</label>
        <div class="field coord">-71.15159,42.38341</div>
        <svg class="mouse" viewBox="0 0 32 32"><g transform="rotate(-25 16 16)"><rect x="7" y="1" width="18" height="30" rx="8" fill="#fff" stroke="#111" stroke-width="3"/><path d="M7 13h18M16 1v12" stroke="#111" stroke-width="2.500"/><circle cx="16" cy="22" r="3.500" fill="#111"/></g></svg>
        <label class="lbl scale-lbl">Scale</label>
        <div class="field scale"><span class="val">1:9868</span><span class="combo-btn"><i class="tri-down"></i></span></div>
        <svg class="lock" viewBox="0 0 24 30"><path d="M5 14V8a7 7 0 0 1 14 0v6" fill="none" stroke="#bbb" stroke-width="3"/><rect x="1" y="13" width="22" height="17" rx="3" fill="#7a7a7a"/></svg>
        <label class="lbl mag-lbl">Magnifier</label>
        <div class="field spin mag-box"><span class="val">100%</span><span class="stepper"><i class="tri-up"></i><i class="tri-down"></i></span></div>
        <label class="lbl rot-lbl">Rotation</label>
        <div class="field spin rot-box"><span class="val">0.0 °</span><span class="stepper"><i class="tri-up"></i><i class="tri-down"></i></span></div>
        <span class="cb render-cb"><svg class="ck"><use href="#check"/></svg></span>
        <label class="lbl render-lbl">Render</label>
        <svg class="crs-ic"><use href="#globeS"/></svg>
        <label class="lbl crs-lbl">EPSG:4326</label>
        <svg class="msg" viewBox="0 0 32 32"><path d="M16 2c8 0 15 5 15 13s-5 12-10 13l5 4c-5 0-8-2-10-4C8 28 1 23 1 15S8 2 16 2z" fill="#777"/><circle cx="9" cy="15" r="2.200" fill="#eee"/><circle cx="16" cy="15" r="2.200" fill="#eee"/><circle cx="23" cy="15" r="2.200" fill="#eee"/></svg>
    </div>
</div>
</body>
</html>
```

FILE: styles.css
```css
* {
    margin: 0;
    padding: 0;
    box-sizing: border-box;
}

html, body {
    background: #fff;
}

body {
    padding: 75px 0 0 111px;
    height: 1728px;
    overflow: hidden;
    font-family: Inter, "Liberation Sans", sans-serif;
    color: #eee;
}

.defs {
    position: absolute;
}

.gt {
    font: bold 18px "Liberation Sans", sans-serif;
    letter-spacing: -.5px;
}

.gt.big {
    font-size: 26px;
}

.gt.huge {
    font: italic bold 28px "Liberation Serif", serif;
}

.gt.thin {
    font-weight: normal;
    font-style: normal;
}

.window {
    width: 2293px;
    height: 1505px;
    background: #323232;
    border: 1px solid #111;
    border-radius: 20px;
    overflow: hidden;
    display: flex;
    flex-direction: column;
    box-shadow: 0 44px 90px rgba(0, 0, 0, .55), 0 0 30px rgba(0, 0, 0, .18);
}

/* title bar */
.titlebar {
    height: 57px;
    flex: none;
    padding-bottom: 2px;
    background: #393736;
    border-bottom: 2px solid #0c0c0c;
    box-shadow: inset 0 1px 0 #757575;
    display: flex;
    align-items: center;
    justify-content: center;
    position: relative;
}

.lights {
    position: absolute;
    left: 16px;
    top: 16px;
    display: flex;
    gap: 16px;
}

.light {
    width: 24px;
    height: 24px;
    border-radius: 50%;
}

.red { background: #ec6a5e; }
.yellow { background: #f4bf4f; }
.green { background: #61c554; }

.title {
    font-size: 27px;
    font-weight: 600;
    color: #c4c2c1;
}

/* toolbars */
.toolbar {
    height: 78px;
    flex: none;
    display: flex;
    align-items: center;
    padding-bottom: 4px;
    background: #323232;
    border-bottom: 2px solid #737373;
    box-shadow: inset 0 -3px 0 #2a2a2a;
}

.toolbar.last {
    height: 75px;
}

.tb {
    width: 66px;
    height: 60px;
    flex: none;
    display: flex;
    align-items: center;
    justify-content: center;
    position: relative;
}

.tb.tight {
    margin-left: -4px;
}

.tb.pull3 {
    margin-left: -3px;
}

.tb.active {
    width: 62px;
    margin: 0 2px;
    background: #3b3b3b;
    border: 3px solid #222;
    border-radius: 6px;
}

.ic {
    width: 48px;
    height: 48px;
}

.off .ic {
    opacity: .5;
    filter: grayscale(.7) brightness(.85);
}

.grip {
    width: 32px;
    height: 36px;
    flex: none;
    position: relative;
}

.grip::before {
    content: "";
    position: absolute;
    right: 5px;
    top: 0;
    width: 10px;
    height: 36px;
    background: conic-gradient(at 4px 4px, transparent 75%, #6e6e6e 0) 0 0 / 6px 6px;
}

.grip.lead { width: 25px; }
.grip.g26 { width: 26px; }
.grip.g28 { width: 28px; }
.grip.g34 { width: 34px; }
.grip.g36 { width: 36px; }

.more {
    width: 32px;
    flex: none;
    font-size: 30px;
    text-align: center;
    color: #393939;
}

.more::before {
    content: "»";
}

.sep {
    width: 14px;
    height: 44px;
    flex: none;
    background: linear-gradient(#262626, #262626) center / 2px 100% no-repeat;
}

.drop {
    width: 25px;
    flex: none;
    display: flex;
    justify-content: flex-start;
}

.drop.d24 {
    width: 24px;
}

.drop::before {
    content: "";
    margin-left: 3px;
    border-left: 8px solid transparent;
    border-right: 8px solid transparent;
    border-top: 10px solid #a0a0a0;
}

.minidrop::after {
    content: "";
    position: absolute;
    right: 6px;
    bottom: 4px;
    border-left: 5px solid transparent;
    border-right: 5px solid transparent;
    border-top: 6px solid #a0a0a0;
}

/* main area */
.main {
    height: 1154px;
    flex: none;
    display: flex;
    overflow: hidden;
}

.sidebar {
    width: 543px;
    flex: none;
    padding-top: 3px;
    display: flex;
    flex-direction: column;
}

.dock-title {
    height: 34px;
    padding: 0 3px 0 9px;
    display: flex;
    align-items: center;
    justify-content: space-between;
    font-size: 21px;
    color: #bdbdbd;
}

.browser .dock-title {
    height: 37px;
}

.dock-btns {
    display: flex;
    gap: 6px;
}

.dk {
    width: 22px;
    height: 22px;
}

.panel-tools {
    height: 63px;
    padding: 0 0 4px 15px;
    display: flex;
    align-items: center;
    gap: 18px;
}

.layer-tools {
    height: 65px;
    padding: 0 0 2px 16px;
}

.pi {
    width: 32px;
    height: 32px;
    flex: none;
}

.drop.small {
    width: 25px;
    margin: 0 -6px 0 -12px;
}

.tree-wrap {
    height: 470px;
    margin-left: 2px;
    display: flex;
    background: #1e1e1e;
}

.tree {
    flex: 1;
    list-style: none;
    padding-top: 1px;
    overflow: hidden;
}

.tree li {
    height: 36px;
    display: flex;
    align-items: center;
    font-size: 26px;
    color: #f0f0f0;
    white-space: nowrap;
}

.tree li.child {
    padding-left: 90px;
}

.tw {
    width: 46px;
    flex: none;
    display: flex;
    justify-content: center;
    padding-right: 6px;
}

.layer-row .tw {
    width: 47px;
    padding-right: 7px;
}

.tw.closed::before {
    content: "";
    border-top: 7px solid transparent;
    border-bottom: 7px solid transparent;
    border-left: 9px solid #8a8a8a;
}

.tw.open::before {
    content: "";
    border-left: 8px solid transparent;
    border-right: 8px solid transparent;
    border-top: 8px solid #8a8a8a;
}

.ti {
    width: 32px;
    height: 32px;
    flex: none;
    margin-right: 12px;
}

.ti.small {
    width: 26px;
    height: 26px;
    margin-right: 14px;
}

.vscroll {
    width: 28px;
    flex: none;
    padding: 1px 2px 1px 0;
    display: flex;
    flex-direction: column;
    background: #2b2b2b;
}

.sb-btn {
    width: 26px;
    height: 25px;
    flex: none;
    background: #383838;
    border: 1px solid #4b4b4b;
    display: flex;
    align-items: center;
    justify-content: center;
}

.vscroll .sb-thumb {
    height: 280px;
    margin: 3px 0;
    background: #404040;
    border: 2px solid #4c4c4c;
}

.sb-track {
    flex: 1;
}

.sb-up { border-left: 8px solid transparent; border-right: 8px solid transparent; border-bottom: 7px solid #aaa; }
.sb-down { border-left: 8px solid transparent; border-right: 8px solid transparent; border-top: 7px solid #aaa; }
.sb-left { border-top: 8px solid transparent; border-bottom: 8px solid transparent; border-right: 6px solid #aaa; }
.sb-right { border-top: 8px solid transparent; border-bottom: 8px solid transparent; border-left: 6px solid #aaa; }

.splitter {
    height: 15px;
    position: relative;
}

.splitter::before {
    content: "";
    position: absolute;
    left: 259px;
    top: 5px;
    width: 33px;
    height: 4px;
    background: conic-gradient(at 4px 4px, transparent 75%, #666 0) 0 0 / 6px 6px;
}

.layer-tree {
    height: 463px;
    margin-left: 2px;
    display: flex;
    flex-direction: column;
    background: #1e1e1e;
    padding-top: 1px;
}

.layer-row {
    height: 36px;
    flex: none;
    display: flex;
    align-items: center;
    font-size: 26px;
    white-space: nowrap;
    overflow: hidden;
    position: relative;
}

.layer-row b {
    font-weight: 700;
    letter-spacing: .35px;
    color: #dcdcdc;
}

.cb {
    width: 26px;
    height: 26px;
    flex: none;
    background: #1e1e1e;
    border: 2px solid #2b2b2b;
    display: flex;
    align-items: center;
    justify-content: center;
    margin-right: 13px;
}

.ck {
    width: 26px;
    height: 26px;
    flex: none;
}

.swatch {
    width: 32px;
    height: 32px;
    flex: none;
    margin-right: 12px;
    border: 2px solid;
}

.pink { background: #e5588c; border-color: #c94a78; }
.maroon { background: #b5464d; border-color: #993a41; }
.amber { background: #d98a25; border-color: #c67b1b; }

.layer-row.selected {
    height: 35px;
    background: #4a4a4a;
}

.layer-row.selected::after {
    content: "";
    position: absolute;
    right: 1px;
    top: 2px;
    bottom: 2px;
    width: 5px;
    background: #111;
}

b.cur {
    color: #fff;
    text-decoration: underline;
    text-underline-offset: 3px;
}

.opacity-row {
    height: 68px;
    flex: none;
    padding-left: 98px;
    display: flex;
    align-items: center;
    font-size: 26px;
}

.slider {
    width: 200px;
    margin-left: 17px;
    display: flex;
    align-items: center;
}

.slider .fill {
    width: 100px;
    height: 6px;
    background: #4f96ee;
}

.slider .knob {
    width: 22px;
    height: 22px;
    background: #404040;
    border: 1px solid #555;
    border-radius: 3px;
    flex: none;
}

.slider .rest {
    flex: 1;
    height: 6px;
    background: #303030;
}

.hscroll {
    height: 26px;
    margin-top: auto;
    padding-right: 2px;
    display: flex;
    gap: 2px;
    background: #2b2b2b;
}

.hscroll .sb-btn {
    height: 26px;
}

.hscroll .sb-thumb {
    width: 409px;
    background: #424242;
    border: 2px solid #4c4c4c;
}

.vsplit {
    width: 14px;
    flex: none;
    position: relative;
}

.vsplit::before {
    content: "";
    position: absolute;
    left: 6px;
    top: 562px;
    width: 4px;
    height: 34px;
    background: conic-gradient(at 4px 4px, transparent 75%, #666 0) 0 0 / 6px 6px;
}

.map {
    flex: 1;
    height: 1151px;
    margin-top: 3px;
    display: block;
}

/* status bar */
.statusbar {
    flex: 1;
    padding-top: 2px;
    display: flex;
    align-items: center;
    font-size: 22px;
    background: #323232;
    position: relative;
}

.statusbar::after {
    content: "";
    position: absolute;
    right: 0;
    bottom: 1px;
    width: 16px;
    height: 20px;
    background: conic-gradient(at 3px 3px, transparent 75%, #6a6a6a 0) 0 0 / 5px 5px;
    clip-path: polygon(100% 0, 100% 100%, 0 100%);
}

.locator {
    width: 430px;
    height: 46px;
    margin-left: 9px;
    flex: none;
    display: flex;
    align-items: center;
    gap: 16px;
    padding-left: 17px;
    background: #1f1f1f;
    border-radius: 6px;
    font-size: 25.500px;
    color: #8e8e8e;
}

.mag {
    width: 24px;
    height: 26px;
    flex: none;
}

.lbl {
    flex: none;
    color: #eee;
}

.field {
    height: 44px;
    flex: none;
    background: #1f1f1f;
    border-radius: 5px;
    display: flex;
    align-items: center;
    color: #eee;
}

.coord-lbl { margin-left: 51px; width: 118px; }
.coord { width: 255px; padding-left: 20px; font-size: 24px; }
.mouse { width: 32px; height: 32px; flex: none; margin: 0 23px 0 11px; }
.scale-lbl { width: 60px; }
.scale { width: 183px; padding-left: 7px; font-size: 23px; }
.val { flex: 1; }

.combo-btn {
    width: 38px;
    height: 42px;
    background: #484848;
    border-radius: 0 4px 4px 0;
    display: flex;
    align-items: center;
    justify-content: center;
}

.tri-down { border-left: 7px solid transparent; border-right: 7px solid transparent; border-top: 9px solid #bbb; }
.tri-up { border-left: 7px solid transparent; border-right: 7px solid transparent; border-bottom: 9px solid #bbb; }

.lock { width: 24px; height: 30px; flex: none; margin: 0 17px 0 27px; }
.mag-lbl { width: 104px; }
.mag-box { width: 191px; padding-left: 9px; }
.rot-lbl { width: 102px; margin-left: 18px; }
.rot-box { width: 185px; padding-left: 10px; font-size: 24px; }

.stepper {
    width: 28px;
    height: 42px;
    background: #484848;
    border-radius: 0 4px 4px 0;
    display: flex;
    flex-direction: column;
    align-items: center;
    justify-content: center;
    gap: 7px;
}

.render-cb { margin: 0 12px 0 13px; background: #222; }
.render-lbl { width: 106px; }
.crs-ic { width: 30px; height: 30px; flex: none; margin-right: 5px; filter: grayscale(1) brightness(1.25); }
.crs-lbl { width: 169px; }
.msg { width: 32px; height: 32px; flex: none; }
```
